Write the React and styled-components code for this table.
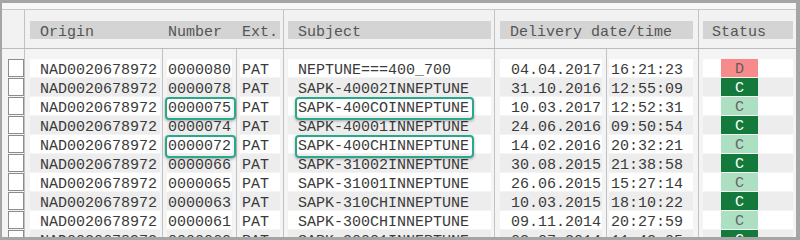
import React from 'react';
import styled, { createGlobalStyle, css } from 'styled-components';

const GlobalStyle = createGlobalStyle`
    body {
        margin: 0;
        font-family: "Liberation Mono", "DejaVu Sans Mono", monospace;
        font-size: 15px;
        color: #3a3a3a;
    }
`;

const GRID = '23px 138px 74px 47px 211px 112px 92px 1fr';
const LINE = '#c2c2c2';

const Frame = styled.div`
    width: 800px;
    height: 240px;
    box-sizing: border-box;
    border: 3px solid #a5a5a5;
    border-left-width: 2px;
    border-right-width: 4px;
    background: #f4f4f4;
    overflow: hidden;
`;

const TopStrip = styled.div`
    height: 6px;
    background: #f7f7f7;
    border-bottom: 1px solid #c8c8c8;
`;

const HeaderRow = styled.div`
    display: grid;
    grid-template-columns: ${GRID};
    height: 38px;
    border-bottom: 1px solid #bcbcbc;
    background: #f2f2f2;
`;

const HeaderCell = styled.div`
    grid-column: span ${p => p.$span || 1};
    padding: 11px ${p => p.$r}px 9px ${p => p.$l}px;
    border-right: ${p => (p.$last ? 'none' : `1px solid ${LINE}`)};
`;

const Band = styled.div`
    display: flex;
    height: 18px;
    box-sizing: border-box;
    padding: 4px 0 0 ${p => p.$pad ?? 10}px;
    line-height: 16px;
    background: #d4d4d4;
    color: #555;
    white-space: pre;
    overflow: visible;
`;

const Label = styled.span`
    width: ${p => (p.$w ? `${p.$w}px` : 'auto')};
`;

const Row = styled.div`
    display: grid;
    grid-template-columns: ${GRID};
    height: ${p => p.$h || 19}px;
`;

const Col = styled.div`
    padding: 0 ${p => p.$r || 0}px 1px ${p => p.$l || 0}px;
    border-right: ${p => (p.$last ? 'none' : `1px solid ${LINE}`)};
    min-width: 0;
`;

const Cell = styled.div`
    height: 18px;
    box-sizing: border-box;
    padding: 4px 0 0 ${p => p.$t}px;
    line-height: 16px;
    white-space: pre;
    background: ${p => (p.$odd ? '#ffffff' : '#ededed')};
`;

const Check = styled.div`
    width: 14px;
    height: 16px;
    margin-left: 6px;
    background: #fff;
    border: 1px solid #8c8c8c;
`;

const Mark = styled.span`
    position: relative;

    &::after {
        content: '';
        position: absolute;
        left: -3px;
        right: -5px;
        top: -3px;
        bottom: -3px;
        border: 2px solid #2aa88b;
        border-radius: 4px;
        box-shadow: 0 1px 3px rgba(0, 0, 0, 0.3);
    }
`;

const badgeColors = {
    D: css`background: #f78b8b; color: #5d5d5d;`,
    dark: css`background: #137a3c; color: #fff;`,
    light: css`background: #ade0c3; color: #666;`,
};

const Badge = styled.div`
    width: 37px;
    height: 18px;
    margin-left: 18px;
    margin-top: -4px;
    box-sizing: border-box;
    padding-top: 3px;
    line-height: 16px;
    text-align: center;
    ${p => badgeColors[p.$type]}
`;

const cols = [
    { key: 'origin', l: 5, r: 2, t: 10 },
    { key: 'number', l: 4, r: 4, t: 1 },
    { key: 'ext', l: 3, r: 3, t: 2 },
    { key: 'subject', l: 4, r: 3, t: 10 },
    { key: 'date', l: 5, r: 4, t: 11 },
    { key: 'time', l: 2, r: 5, t: 2 },
];

const rows = [
    { number: '0000080', subject: 'NEPTUNE===400_700', date: '04.04.2017', time: '16:21:23', status: 'D' },
    { number: '0000078', subject: 'SAPK-40002INNEPTUNE', date: '31.10.2016', time: '12:55:09', status: 'C' },
    { number: '0000075', subject: 'SAPK-400COINNEPTUNE', date: '10.03.2017', time: '12:52:31', status: 'C', marked: true },
    { number: '0000074', subject: 'SAPK-40001INNEPTUNE', date: '24.06.2016', time: '09:50:54', status: 'C' },
    { number: '0000072', subject: 'SAPK-400CHINNEPTUNE', date: '14.02.2016', time: '20:32:21', status: 'C', marked: true },
    { number: '0000066', subject: 'SAPK-31002INNEPTUNE', date: '30.08.2015', time: '21:38:58', status: 'C' },
    { number: '0000065', subject: 'SAPK-31001INNEPTUNE', date: '26.06.2015', time: '15:27:14', status: 'C' },
    { number: '0000063', subject: 'SAPK-310CHINNEPTUNE', date: '10.03.2015', time: '18:10:22', status: 'C' },
    { number: '0000061', subject: 'SAPK-300CHINNEPTUNE', date: '09.11.2014', time: '20:27:59', status: 'C' },
    { number: '0000060', subject: 'SAPK-30001INNEPTUNE', date: '03.07.2014', time: '11:42:05', status: 'C' },
];

const App = () => {
    return (
        <>
            <GlobalStyle />
            <Frame>
                <TopStrip />
                <HeaderRow>
                    <HeaderCell $l={0} $r={0} />
                    <HeaderCell $span={3} $l={5} $r={3}>
                        <Band>
                            <Label $w={128}>Origin</Label>
                            <Label $w={74}>Number</Label>
                            <Label>Ext.</Label>
                        </Band>
                    </HeaderCell>
                    <HeaderCell $l={4} $r={3}>
                        <Band>Subject</Band>
                    </HeaderCell>
                    <HeaderCell $span={2} $l={5} $r={5}>
                        <Band>Delivery date/time</Band>
                    </HeaderCell>
                    <HeaderCell $l={4} $r={3} $last>
                        <Band $pad={9}>Status</Band>
                    </HeaderCell>
                </HeaderRow>
                <Row $h={10}>
                    <Col />
                    {cols.map(c => <Col key={c.key} />)}
                    <Col $last />
                </Row>
                {rows.map((r, i) => {
                    const odd = i % 2 === 0;
                    const data = { ...r, origin: 'NAD0020678972', ext: 'PAT' };
                    const type = r.status === 'D' ? 'D' : odd ? 'light' : 'dark';
                    return (
                        <Row key={r.number}>
                            <Col>
                                <Check />
                            </Col>
                            {cols.map(c => (
                                <Col key={c.key} $l={c.l} $r={c.r}>
                                    <Cell $t={c.t} $odd={odd}>
                                        {r.marked && (c.key === 'number' || c.key === 'subject')
                                            ? <Mark>{data[c.key]}</Mark>
                                            : data[c.key]}
                                    </Cell>
                                </Col>
                            ))}
                            <Col $l={4} $r={3} $last>
                                <Cell $t={0} $odd={odd}>
                                    <Badge $type={type}>{r.status}</Badge>
                                </Cell>
                            </Col>
                        </Row>
                    );
                })}
            </Frame>
        </>
    );
};

export default App;
